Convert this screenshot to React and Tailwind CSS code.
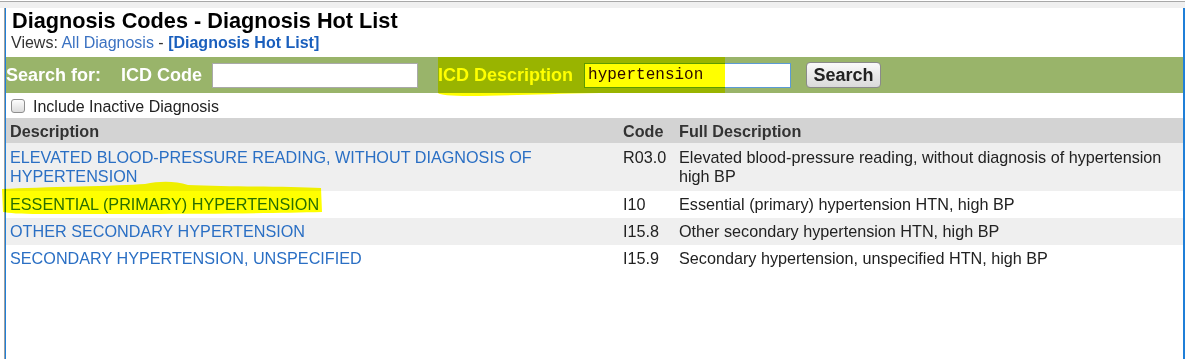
const rows = [
  {
    desc: "ELEVATED BLOOD-PRESSURE READING, WITHOUT DIAGNOSIS OF HYPERTENSION",
    code: "R03.0",
    full: "Elevated blood-pressure reading, without diagnosis of hypertension high BP",
  },
  { desc: "ESSENTIAL (PRIMARY) HYPERTENSION", code: "I10", full: "Essential (primary) hypertension HTN, high BP" },
  { desc: "OTHER SECONDARY HYPERTENSION", code: "I15.8", full: "Other secondary hypertension HTN, high BP" },
  { desc: "SECONDARY HYPERTENSION, UNSPECIFIED", code: "I15.9", full: "Secondary hypertension, unspecified HTN, high BP" },
];

function Checkbox() {
  return (
    <span className="block h-[14px] w-[14px] rounded-[3px] border border-[#8e8e8e] bg-gradient-to-b from-[#fdfdfd] to-[#dcdcdc]" />
  );
}

export default function App() {
  return (
    <div className="relative h-[359px] w-[1185px] overflow-hidden bg-white font-['Liberation_Sans',Arial,sans-serif]">
      <div className="h-px bg-white" />
      <div className="h-px bg-[#a8a8a8]" />
      <div className="h-[6px] bg-[#f0f0f0]" />

      <div className="flex h-[351px]">
        <div className="w-[4px]" />
        <div className="w-px bg-[#a0a0a0]" />
        <div className="w-px bg-[#1f7fd8]" />

        <div className="w-[1177px]">
          <h1 className="pl-[6px] pt-px text-[21.7px] font-bold leading-[23px] text-black">
            Diagnosis Codes - Diagnosis Hot List
          </h1>
          <p className="mt-[2px] pl-[5px] text-[16px] leading-[18px] text-[#333]">
            Views: <a className="text-[#3b72c2]">All Diagnosis</a> -{" "}
            <a className="font-bold text-[#1a5fbd]">[Diagnosis Hot List]</a>
          </p>

          <div className="mt-[5px] flex h-[36px] items-center bg-[#99b46a] text-[18px] font-bold text-white">
            <span>Search for:</span>
            <span className="ml-[20px]">ICD Code</span>
            <div className="ml-[10px] h-[25px] w-[206px] border border-[#a9a9a9] bg-white" />
            <span className="ml-[20px]">ICD Description</span>
            <div className="ml-[11px] flex h-[25px] w-[207px] items-center border border-[#5b9bd5] bg-white pl-[3px] font-['Liberation_Mono',monospace] text-[16px] font-normal text-[#2a0a0a]">
              hypertension
            </div>
            <button className="ml-[15px] h-[26px] w-[75px] rounded-[4px] border border-[#8a8a8a] bg-gradient-to-b from-[#fafafa] to-[#dadada] text-[18px] font-bold leading-none text-[#222]">
              Search
            </button>
          </div>

          <div className="flex h-[25px] items-center pt-[3px] text-[16px] text-[#222]">
            <span className="ml-[5px] -mt-[3px]">
              <Checkbox />
            </span>
            <span className="ml-[8px]">Include Inactive Diagnosis</span>
          </div>

          <div className="text-[16.2px] leading-[19px]">
            <div className="grid h-[25px] grid-cols-[613px_56px_1fr] items-center bg-[#d3d3d3] pt-px font-bold text-[#333]">
              <div className="pl-[4px]">Description</div>
              <div className="pl-[4px]">Code</div>
              <div className="pl-[4px]">Full Description</div>
            </div>
            {rows.map((r, i) => (
              <div
                key={r.code}
                className={`grid grid-cols-[613px_56px_1fr] ${i === 0 ? "py-[5px]" : "py-[4px]"} ${
                  i % 2 === 0 ? "bg-[#efefef]" : "bg-white"
                }`}
              >
                <a className="pl-[4px] pr-[60px] text-[#2a6fc4]">{r.desc}</a>
                <div className="pl-[4px] text-[#222]">{r.code}</div>
                <div className="pl-[4px] pr-[10px] text-[#222]">{r.full}</div>
              </div>
            ))}
          </div>
        </div>

        <div className="w-[2px] bg-[#1f7fd8]" />
      </div>

      {/* marker highlights over the screenshot */}
      <svg className="pointer-events-none absolute left-0 top-0 mix-blend-multiply" width="1185" height="359">
        <path
          d="M438 57 L725 57 L725 93 L600 93 C540 94 500 96 470 96 C450 96 440 95 438 93 Z"
          fill="#ffff00"
        />
        <path
          d="M2 189 C40 187 120 186 145 184 C160 181 175 181 188 185 C230 187 290 186 321 188 L322 212 C250 214 120 214 40 214 C20 214 8 213 3 212 Z"
          fill="#ffff00"
        />
      </svg>
    </div>
  );
}
